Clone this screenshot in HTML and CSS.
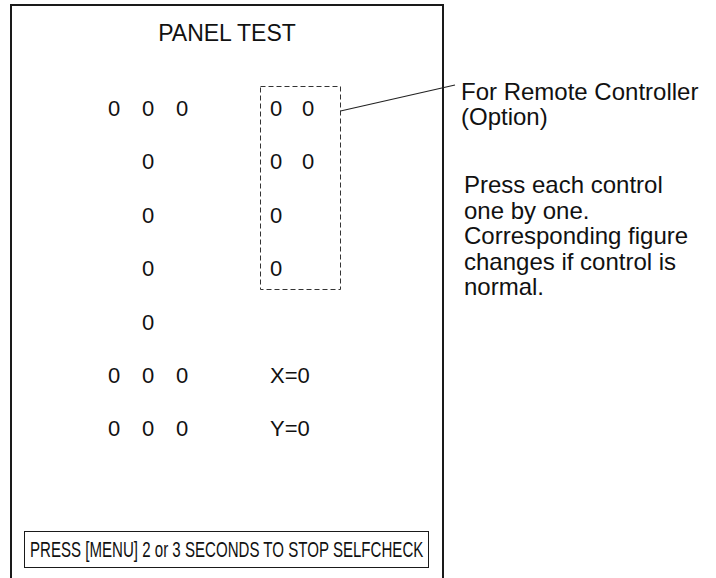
FILE: index.html
```html
<!DOCTYPE html>
<html lang = "en">
	<head>
		<meta charset = "UTF-8">
		<meta content = "width=device-width, initial-scale=1.0" name = "viewport">
		<link rel="stylesheet" href="styles.css">
		<title>Panel Test</title>
	</head>
	<body>
		<div class = "page">
			<div class = "screen">
				<h2 class = "title">PANEL TEST</h2>
				<div class = "panel">
					<div class = "keys">
						<div class = "row"><span>0</span><span>0</span><span>0</span></div>
						<div class = "row single"><span>0</span></div>
						<div class = "row single"><span>0</span></div>
						<div class = "row single"><span>0</span></div>
						<div class = "row single"><span>0</span></div>
						<div class = "row"><span>0</span><span>0</span><span>0</span></div>
						<div class = "row"><span>0</span><span>0</span><span>0</span></div>
					</div>
					<div class = "remote-col">
						<div class = "remote">
							<svg class = "remote-frame" width = "81" height = "204" viewBox = "0 0 81 204">
								<rect x = "0.5" y = "0.5" width = "80" height = "203" fill = "none" stroke = "#333" stroke-width = "1" stroke-dasharray = "5 3"/>
							</svg>
							<div class = "row"><span>0</span><span>0</span></div>
							<div class = "row"><span>0</span><span>0</span></div>
							<div class = "row"><span>0</span></div>
							<div class = "row"><span>0</span></div>
						</div>
						<div class = "row"></div>
						<div class = "row">X=0</div>
						<div class = "row">Y=0</div>
					</div>
				</div>
				<div class = "stop-box"><span>PRESS [MENU] 2 or 3 SECONDS TO STOP SELFCHECK</span></div>
			</div>
			<div class = "notes">
				<p class = "remote-note">For Remote Controller<br>(Option)</p>
				<p class = "how-to">Press each control<br>one by one.<br>Corresponding figure<br>changes if control is<br>normal.</p>
			</div>
			<svg class = "leader" width = "716" height = "578" viewBox = "0 0 716 578">
				<line x1 = "340.5" y1 = "111" x2 = "455" y2 = "85" stroke = "#222" stroke-width = "1.2"/>
			</svg>
		</div>
	</body>
</html>
```
FILE: styles.css
```css
body {
    margin: 0;
    background-color: #FFF;
    color: #111;
    font-family: 'Liberation Sans', Arial, sans-serif;
}

.page {
    position: relative;
    display: flex;
    align-items: flex-start;
    width: 716px;
    height: 578px;
    overflow: hidden;
}

.screen {
    display: flex;
    flex-direction: column;
    box-sizing: border-box;
    width: 434px;
    height: 574px;
    margin: 4px 0 0 10px;
    padding-top: 13px;
    border: 2px solid #1A1A1A;
    border-bottom: none;
}

.title {
    margin: 0;
    font-size: 23px;
    font-weight: normal;
    line-height: 28px;
    text-align: center;
}

.panel {
    display: flex;
    margin-top: 35px;
    padding-left: 96px;
    font-size: 22px;
}

.keys {
    width: 162px;
}

.row {
    display: flex;
    height: 53.4px;
    line-height: 53.4px;
}

.keys .row span {
    width: 34px;
}

.keys .row.single {
    padding-left: 34px;
}

.remote-col .row span {
    width: 32px;
}

.remote {
    position: relative;
}

.remote-frame {
    position: absolute;
    left: -10px;
    top: 4px;
}

.stop-box {
    box-sizing: border-box;
    width: 405px;
    height: 37px;
    margin: auto 0 10px 12px;
    padding: 2px 0 0 5px;
    border: 1px solid #1A1A1A;
    font-size: 22px;
    line-height: 32px;
    white-space: nowrap;
}

.stop-box span {
    display: inline-block;
    transform: scaleX(0.685);
    transform-origin: left center;
}

.notes {
    padding: 79px 0 0 17px;
    font-size: 24px;
}

.notes p {
    margin: 0;
}

.remote-note {
    line-height: 25px;
}

.how-to {
    margin-top: 43px !important;
    padding-left: 3px;
    line-height: 25.5px;
}

.leader {
    position: absolute;
    top: 0;
    left: 0;
    pointer-events: none;
}
```
